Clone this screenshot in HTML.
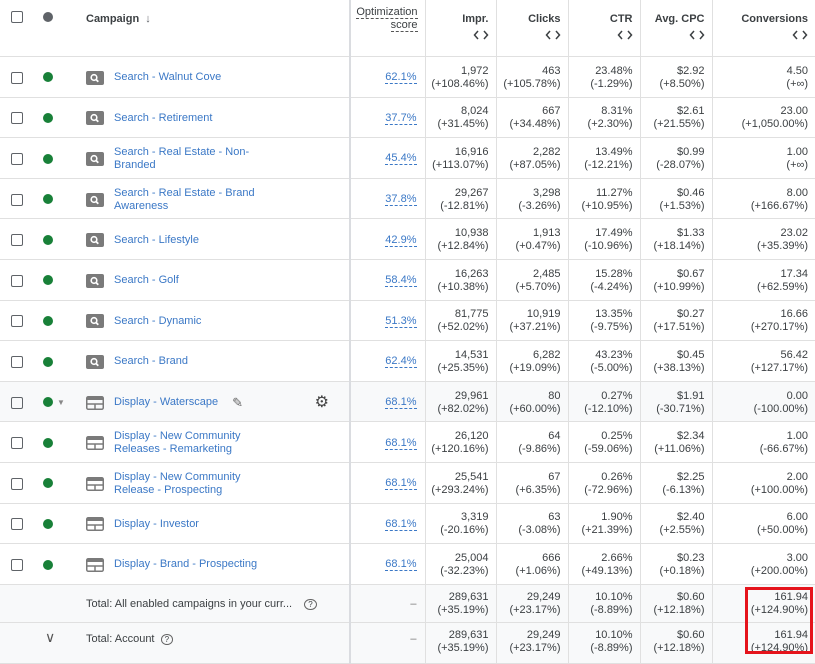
<!DOCTYPE html>
<html><head><meta charset="utf-8"><style>
body{margin:0;width:815px;height:654px;overflow:hidden;background:#fff;font-family:"Liberation Sans",sans-serif;font-size:11px;color:#3c4043}
table{border-collapse:collapse;table-layout:fixed;width:815px}
td{border-bottom:1px solid #e0e0e0;padding:2px 0 0 0;vertical-align:middle;height:37.6px;line-height:13px}
td.n{text-align:right;padding-right:7px;border-left:1px solid #e0e0e0}
td.o{border-left:2px solid #dadce0;text-align:right;padding-right:8px}
.cb{width:12px;height:12px;border:1.5px solid #5f6368;border-radius:2px;margin-left:11px;box-sizing:border-box}
.dot{width:10px;height:10px;border-radius:50%;background:#188038;margin-left:8px;display:inline-block;vertical-align:middle}
.ic{display:inline-block;width:18px;height:14px;vertical-align:middle;margin-right:10px}
.camp{display:flex;align-items:center;padding-left:16px}
a{color:#3b78c6;text-decoration:none}
.u{color:#3b78c6;border-bottom:1px dashed #3b78c6}
th{font-weight:bold;font-size:11px;color:#3c4043;text-align:right;padding:12px 7px 0 0;vertical-align:top;height:44px;border-bottom:1px solid #e0e0e0;border-left:1px solid #e0e0e0;line-height:14px}
.ar{display:block;margin-top:4px;height:10px}
tr.g td{background:#f8f9fa}
tr.tot td{background:#f8f9fa;height:35px}
tr.tot2 td{background:#f8f9fa;height:30px;vertical-align:top;padding-top:6px}
tr.tot2 td.n,tr.tot2 td.o{padding-top:6px}
</style></head><body>
<svg width="0" height="0" style="position:absolute"><defs>
<symbol id="s" viewBox="0 0 18 14"><rect width="18" height="14" rx="2" fill="#7a7a7a"/><circle cx="8" cy="6.5" r="2.8" fill="none" stroke="#fff" stroke-width="1.6"/><line x1="10" y1="8.5" x2="12.3" y2="10.8" stroke="#fff" stroke-width="1.8"/></symbol>
<symbol id="d" viewBox="0 0 18 14"><rect x="0.75" y="0.75" width="16.5" height="12.5" rx="1.5" fill="none" stroke="#7a7a7a" stroke-width="1.5"/><rect x="1" y="1" width="16" height="3" fill="#7a7a7a"/><line x1="1" y1="8" x2="17" y2="8" stroke="#7a7a7a" stroke-width="1.5"/><line x1="9" y1="8" x2="9" y2="13" stroke="#7a7a7a" stroke-width="1.5"/></symbol>
<symbol id="a" viewBox="0 0 16 10"><path d="M5 1 L1.5 5 L5 9 M11 1 L14.5 5 L11 9" fill="none" stroke="#3c4043" stroke-width="1.5"/></symbol>
</defs></svg>
<table>
<colgroup><col style="width:35px"><col style="width:35px"><col style="width:280px"><col style="width:75px"><col style="width:71px"><col style="width:72px"><col style="width:72px"><col style="width:72px"><col style="width:103px"></colgroup>
<tr><th style="border-left:0;padding:11px 0 0"><div class="cb"></div></th><th style="border-left:0;padding:12px 0 0;text-align:left"><span class="dot" style="background:#5f6368;vertical-align:top"></span></th><th style="border-left:0;text-align:left;padding-left:16px">Campaign &nbsp;<span style="font-weight:normal;color:#5f6368">↓</span></th><th style="border-left:2px solid #dadce0;font-weight:normal;padding-top:6px;line-height:13px"><span style="border-bottom:1px dashed #555">Optimization</span><br><span style="border-bottom:1px dashed #555">score</span></th><th>Impr.<svg class="ar" width="16" height="10" style="margin-left:auto"><use href="#a"/></svg></th><th>Clicks<svg class="ar" width="16" height="10" style="margin-left:auto"><use href="#a"/></svg></th><th>CTR<svg class="ar" width="16" height="10" style="margin-left:auto"><use href="#a"/></svg></th><th>Avg. CPC<svg class="ar" width="16" height="10" style="margin-left:auto"><use href="#a"/></svg></th><th>Conversions<svg class="ar" width="16" height="10" style="margin-left:auto"><use href="#a"/></svg></th></tr>
<tr><td><div class="cb"></div></td><td><span class="dot"></span></td><td><div class="camp"><svg class="ic"><use href="#s"/></svg><a>Search - Walnut Cove</a></div></td><td class="o"><span class="u">62.1%</span></td><td class="n">1,972<br>(+108.46%)</td><td class="n">463<br>(+105.78%)</td><td class="n">23.48%<br>(-1.29%)</td><td class="n">$2.92<br>(+8.50%)</td><td class="n">4.50<br>(+∞)</td></tr>
<tr><td><div class="cb"></div></td><td><span class="dot"></span></td><td><div class="camp"><svg class="ic"><use href="#s"/></svg><a>Search - Retirement</a></div></td><td class="o"><span class="u">37.7%</span></td><td class="n">8,024<br>(+31.45%)</td><td class="n">667<br>(+34.48%)</td><td class="n">8.31%<br>(+2.30%)</td><td class="n">$2.61<br>(+21.55%)</td><td class="n">23.00<br>(+1,050.00%)</td></tr>
<tr><td><div class="cb"></div></td><td><span class="dot"></span></td><td><div class="camp"><svg class="ic"><use href="#s"/></svg><a>Search - Real Estate - Non-<br>Branded</a></div></td><td class="o"><span class="u">45.4%</span></td><td class="n">16,916<br>(+113.07%)</td><td class="n">2,282<br>(+87.05%)</td><td class="n">13.49%<br>(-12.21%)</td><td class="n">$0.99<br>(-28.07%)</td><td class="n">1.00<br>(+∞)</td></tr>
<tr><td><div class="cb"></div></td><td><span class="dot"></span></td><td><div class="camp"><svg class="ic"><use href="#s"/></svg><a>Search - Real Estate - Brand<br>Awareness</a></div></td><td class="o"><span class="u">37.8%</span></td><td class="n">29,267<br>(-12.81%)</td><td class="n">3,298<br>(-3.26%)</td><td class="n">11.27%<br>(+10.95%)</td><td class="n">$0.46<br>(+1.53%)</td><td class="n">8.00<br>(+166.67%)</td></tr>
<tr><td><div class="cb"></div></td><td><span class="dot"></span></td><td><div class="camp"><svg class="ic"><use href="#s"/></svg><a>Search - Lifestyle</a></div></td><td class="o"><span class="u">42.9%</span></td><td class="n">10,938<br>(+12.84%)</td><td class="n">1,913<br>(+0.47%)</td><td class="n">17.49%<br>(-10.96%)</td><td class="n">$1.33<br>(+18.14%)</td><td class="n">23.02<br>(+35.39%)</td></tr>
<tr><td><div class="cb"></div></td><td><span class="dot"></span></td><td><div class="camp"><svg class="ic"><use href="#s"/></svg><a>Search - Golf</a></div></td><td class="o"><span class="u">58.4%</span></td><td class="n">16,263<br>(+10.38%)</td><td class="n">2,485<br>(+5.70%)</td><td class="n">15.28%<br>(-4.24%)</td><td class="n">$0.67<br>(+10.99%)</td><td class="n">17.34<br>(+62.59%)</td></tr>
<tr><td><div class="cb"></div></td><td><span class="dot"></span></td><td><div class="camp"><svg class="ic"><use href="#s"/></svg><a>Search - Dynamic</a></div></td><td class="o"><span class="u">51.3%</span></td><td class="n">81,775<br>(+52.02%)</td><td class="n">10,919<br>(+37.21%)</td><td class="n">13.35%<br>(-9.75%)</td><td class="n">$0.27<br>(+17.51%)</td><td class="n">16.66<br>(+270.17%)</td></tr>
<tr><td><div class="cb"></div></td><td><span class="dot"></span></td><td><div class="camp"><svg class="ic"><use href="#s"/></svg><a>Search - Brand</a></div></td><td class="o"><span class="u">62.4%</span></td><td class="n">14,531<br>(+25.35%)</td><td class="n">6,282<br>(+19.09%)</td><td class="n">43.23%<br>(-5.00%)</td><td class="n">$0.45<br>(+38.13%)</td><td class="n">56.42<br>(+127.17%)</td></tr>
<tr class="g"><td><div class="cb"></div></td><td><span class="dot"></span><span style="color:#888;font-size:8px;margin-left:4px;vertical-align:middle">▼</span></td><td><div class="camp"><svg class="ic"><use href="#d"/></svg><a>Display - Waterscape</a><span style="color:#666;margin-left:14px;font-size:13px">✎</span><span style="color:#444;margin-left:auto;margin-right:20px;font-size:16px">⚙</span></div></td><td class="o"><span class="u">68.1%</span></td><td class="n">29,961<br>(+82.02%)</td><td class="n">80<br>(+60.00%)</td><td class="n">0.27%<br>(-12.10%)</td><td class="n">$1.91<br>(-30.71%)</td><td class="n">0.00<br>(-100.00%)</td></tr>
<tr><td><div class="cb"></div></td><td><span class="dot"></span></td><td><div class="camp"><svg class="ic"><use href="#d"/></svg><a>Display - New Community<br>Releases - Remarketing</a></div></td><td class="o"><span class="u">68.1%</span></td><td class="n">26,120<br>(+120.16%)</td><td class="n">64<br>(-9.86%)</td><td class="n">0.25%<br>(-59.06%)</td><td class="n">$2.34<br>(+11.06%)</td><td class="n">1.00<br>(-66.67%)</td></tr>
<tr><td><div class="cb"></div></td><td><span class="dot"></span></td><td><div class="camp"><svg class="ic"><use href="#d"/></svg><a>Display - New Community<br>Release - Prospecting</a></div></td><td class="o"><span class="u">68.1%</span></td><td class="n">25,541<br>(+293.24%)</td><td class="n">67<br>(+6.35%)</td><td class="n">0.26%<br>(-72.96%)</td><td class="n">$2.25<br>(-6.13%)</td><td class="n">2.00<br>(+100.00%)</td></tr>
<tr><td><div class="cb"></div></td><td><span class="dot"></span></td><td><div class="camp"><svg class="ic"><use href="#d"/></svg><a>Display - Investor</a></div></td><td class="o"><span class="u">68.1%</span></td><td class="n">3,319<br>(-20.16%)</td><td class="n">63<br>(-3.08%)</td><td class="n">1.90%<br>(+21.39%)</td><td class="n">$2.40<br>(+2.55%)</td><td class="n">6.00<br>(+50.00%)</td></tr>
<tr><td><div class="cb"></div></td><td><span class="dot"></span></td><td><div class="camp"><svg class="ic"><use href="#d"/></svg><a>Display - Brand - Prospecting</a></div></td><td class="o"><span class="u">68.1%</span></td><td class="n">25,004<br>(-32.23%)</td><td class="n">666<br>(+1.06%)</td><td class="n">2.66%<br>(+49.13%)</td><td class="n">$0.23<br>(+0.18%)</td><td class="n">3.00<br>(+200.00%)</td></tr>
<tr class="tot"><td></td><td></td><td style="padding-left:16px">Total: All enabled campaigns in your curr... &nbsp;&nbsp;&nbsp;<span style="border:1px solid #666;border-radius:50%;font-size:8px;padding:0 3px">?</span></td><td class="o" style="color:#777">–</td><td class="n">289,631<br>(+35.19%)</td><td class="n">29,249<br>(+23.17%)</td><td class="n">10.10%<br>(-8.89%)</td><td class="n">$0.60<br>(+12.18%)</td><td class="n">161.94<br>(+124.90%)</td></tr>
<tr class="tot2"><td></td><td style="font-size:14px;color:#555;padding-left:10px;padding-top:8px">∨</td><td style="padding-left:16px;padding-top:10px">Total: Account &nbsp;<span style="border:1px solid #666;border-radius:50%;font-size:8px;padding:0 3px">?</span></td><td class="o" style="color:#777;padding-top:10px">–</td><td class="n">289,631<br>(+35.19%)</td><td class="n">29,249<br>(+23.17%)</td><td class="n">10.10%<br>(-8.89%)</td><td class="n">$0.60<br>(+12.18%)</td><td class="n">161.94<br>(+124.90%)</td></tr>
</table>
<div style="position:absolute;left:745px;top:587px;width:62px;height:61px;border:3px solid #e5141c"></div>
</body></html>
